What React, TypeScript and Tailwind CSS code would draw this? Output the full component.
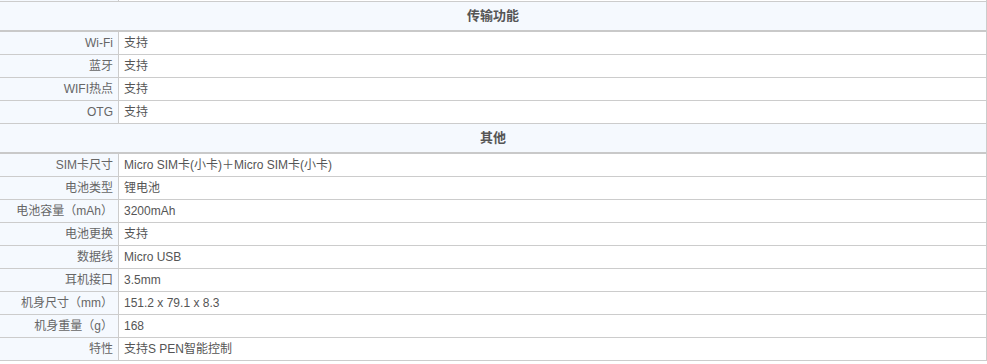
const sections: { title: string; rows: [string, string][] }[] = [
  {
    title: '传输功能',
    rows: [
      ['Wi-Fi', '支持'],
      ['蓝牙', '支持'],
      ['WIFI热点', '支持'],
      ['OTG', '支持'],
    ],
  },
  {
    title: '其他',
    rows: [
      ['SIM卡尺寸', 'Micro SIM卡(小卡)＋Micro SIM卡(小卡)'],
      ['电池类型', '锂电池'],
      ['电池容量（mAh）', '3200mAh'],
      ['电池更换', '支持'],
      ['数据线', 'Micro USB'],
      ['耳机接口', '3.5mm'],
      ['机身尺寸（mm）', '151.2 x 79.1 x 8.3'],
      ['机身重量（g）', '168'],
      ['特性', '支持S PEN智能控制'],
    ],
  },
];

function Row({ label, value }: { label: string; value: string }) {
  return (
    <div className="flex h-[23px] border-b border-[#cccccc]">
      <div className="w-[119px] shrink-0 bg-[#f5f9fe] border-r border-[#cccccc] pr-[5px] text-right text-[#666666] leading-[22px]">
        {label}
      </div>
      <div className="flex-1 bg-white pl-[5px] text-[#555555] leading-[22px]">{value}</div>
    </div>
  );
}

export default function App() {
  return (
    <div
      className="w-[987px] h-[364px] bg-white text-[12px] overflow-hidden"
      style={{ fontFamily: '"Liberation Sans", Arial, "Noto Sans CJK SC", sans-serif' }}
    >
      <div className="border-r border-[#cccccc]">
        {/* tail of the previous row */}
        <div className="flex h-[2px] border-b border-[#cccccc]">
          <div className="w-[119px] bg-[#f5f9fe] border-r border-[#cccccc]" />
          <div className="flex-1 bg-white" />
        </div>

        {sections.map((s) => (
          <div key={s.title}>
            <div className="h-[30px] bg-[#f5f9fe] border-b-2 border-[#c9c9c9] text-center font-bold text-[13px] text-[#555555] leading-[28px]">
              {s.title}
            </div>
            {s.rows.map(([l, v]) => (
              <Row key={l} label={l} value={v} />
            ))}
          </div>
        ))}
      </div>
    </div>
  );
}
